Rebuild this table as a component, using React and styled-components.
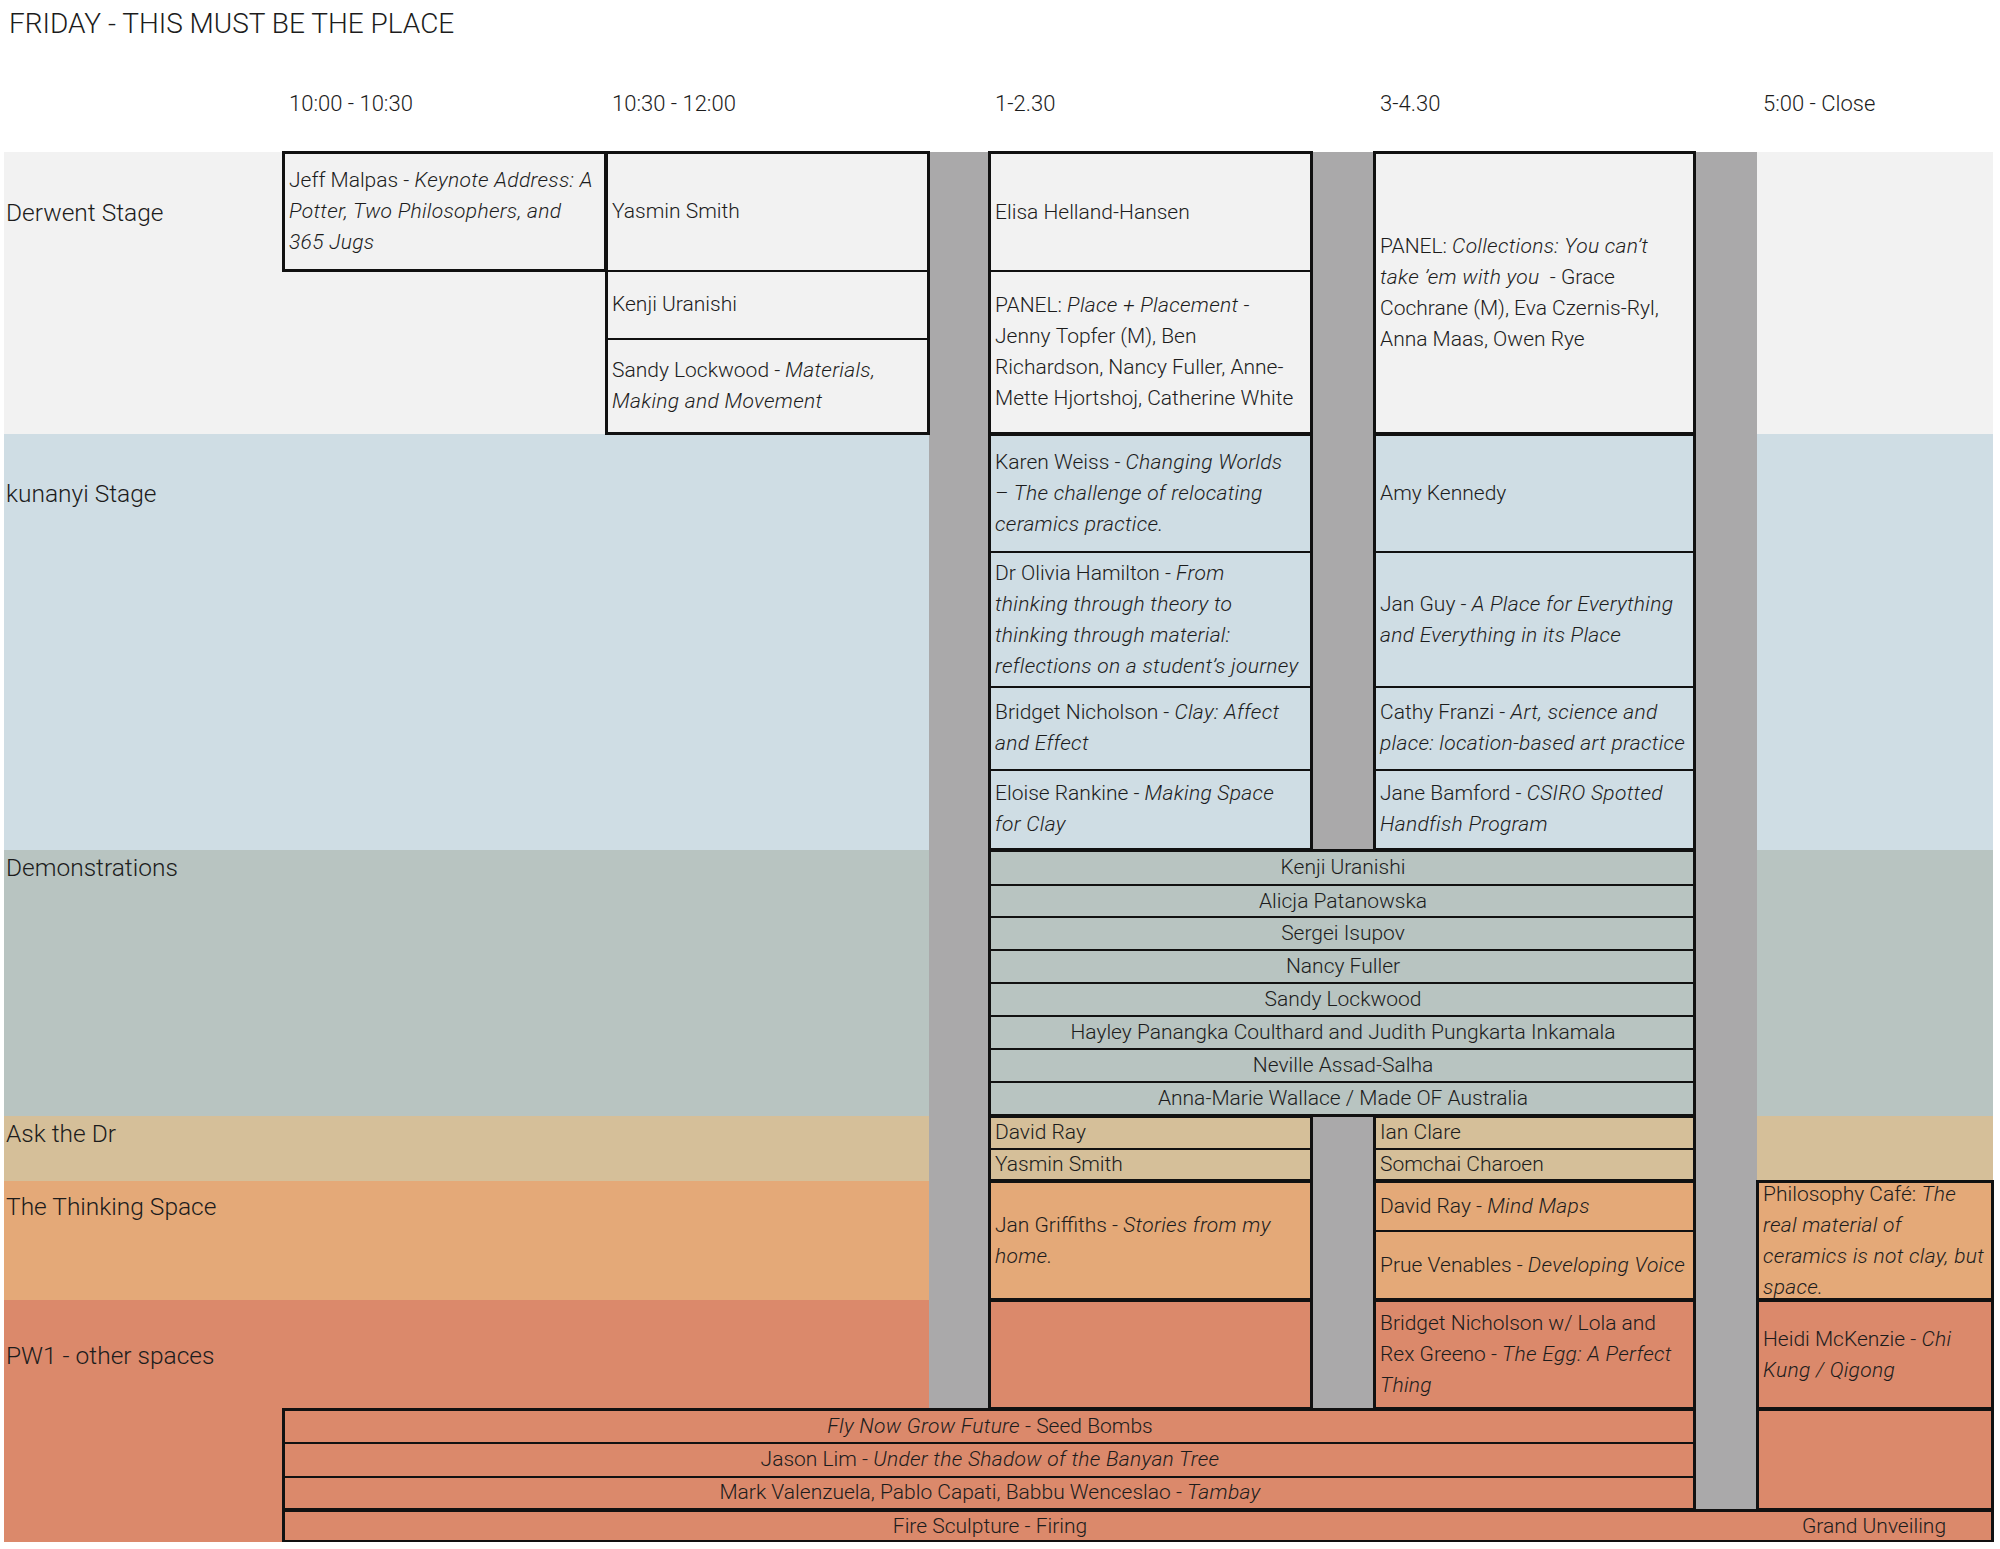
import React from 'react'
import styled, { createGlobalStyle } from 'styled-components'

const COLS = [279, 323, 323, 60, 323, 62, 321, 62, 236]
const ROWS = [119, 68, 95, 118, 136, 83, 79, 34, 33, 33, 33, 33, 34, 33, 33, 33, 32, 50, 69, 109, 34, 34, 33, 32]

const INK = '#1c1c1c'
const NB = '\u00a0'

const GlobalStyle = createGlobalStyle`
    body {
        margin: 0;
        background: #fff;
        font-family: Roboto, "Liberation Sans", sans-serif;
        font-weight: 300;
        color: ${INK};
    }
    em {
        letter-spacing: 0.3px;
    }
`

const Page = styled.div`
    width: 1989px;
    padding-left: 4px;
`

const Title = styled.h1`
    box-sizing: border-box;
    height: 92px;
    margin: 0;
    padding: 10px 0 0 5px;
    font-size: 28px;
    line-height: 28px;
    font-weight: 300;
`

const Schedule = styled.div`
    display: grid;
    grid-template-columns: ${COLS.map(c => c + 'px').join(' ')};
    grid-template-rows: 60px ${ROWS.map(r => r + 'px').join(' ')};
`

// c = column index (0 = stage names), r = row index below the time header
const place = p => `
    grid-column: ${p.$c + 1} / span ${p.$cs || 1};
    grid-row: ${p.$r + 2} / span ${p.$rs || 1};
`

const TimeHead = styled.div`
    grid-row: 1;
    grid-column: ${p => p.$c + 1};
    padding: 1px 0 0 6px;
    font-size: 22px;
    line-height: 22px;
    white-space: nowrap;
`

const Band = styled.div`
    grid-column: 1 / -1;
    grid-row: ${p => p.$r + 2} / span ${p => p.$rs};
    background: ${p => p.$bg};
`

const StageName = styled.div`
    grid-column: 1;
    grid-row: ${p => p.$r + 2};
    align-self: center;
    padding: 2px 0 0 2px;
    font-size: 24.5px;
    line-height: 28px;
    white-space: nowrap;
`

const Break = styled.div`
    ${place}
    background: #aaa9aa;
`

const Block = styled.div`
    ${place}
    display: flex;
    flex-direction: column;
    margin: -1px;
    border: 3px solid #111;
    min-width: 0;
    min-height: 0;
`

const Slot = styled.div`
    flex: ${p => p.$h} 1 0px;
    min-height: 0;
    display: flex;
    align-items: center;
    justify-content: ${p => (p.$center ? 'center' : 'flex-start')};
    text-align: ${p => (p.$center ? 'center' : 'left')};
    padding: 0 2px 0 4px;
    font-size: 21px;
    line-height: 31px;

    & + & {
        border-top: 2px solid #111;
    }
`

const SlotText = styled.div`
    min-width: 0;
`

const Keep = styled.span`
    white-space: nowrap;
`

const FireRow = styled.div`
    flex: 1;
    display: grid;
    grid-template-columns: 1410px 62px 1fr;
    align-items: center;
    font-size: 21px;
    line-height: 26px;
    text-align: center;
`

const FireCell = styled.div`
    grid-column: ${p => p.$col};
    white-space: nowrap;
`

const spanHeight = (r, n) => ROWS.slice(r, r + n).reduce((a, b) => a + b, 0)

const times = [
    { c: 1, label: '10:00 - 10:30' },
    { c: 2, label: '10:30 - 12:00' },
    { c: 4, label: '1-2.30' },
    { c: 6, label: '3-4.30' },
    { c: 8, label: '5:00 - Close' },
]

const stages = [
    { name: 'Derwent Stage', r: 0, rs: 3, bg: '#f2f2f2' },
    { name: 'kunanyi Stage', r: 3, rs: 4, bg: '#cfdde4' },
    { name: 'Demonstrations', r: 7, rs: 8, bg: '#b8c4c1' },
    { name: 'Ask the Dr', r: 15, rs: 2, bg: '#d5bf99' },
    { name: 'The Thinking Space', r: 17, rs: 2, bg: '#e4a978' },
    { name: 'PW1 - other spaces', r: 19, rs: 5, bg: '#db896b' },
]

const breaks = [
    { c: 3, r: 0, rs: 20 },
    { c: 5, r: 0, rs: 7 },
    { c: 5, r: 15, rs: 5 },
    { c: 7, r: 0, rs: 23 },
]

const demos = [
    'Kenji Uranishi',
    'Alicja Patanowska',
    'Sergei Isupov',
    'Nancy Fuller',
    'Sandy Lockwood',
    'Hayley Panangka Coulthard and Judith Pungkarta Inkamala',
    'Neville Assad-Salha',
    'Anna-Marie Wallace / Made OF Australia',
]

// each slot: [rows it covers, content]; NB / Keep hold words together the way the printed sheet wraps them
const blocks = [
    { c: 1, r: 0, slots: [[1, <>Jeff Malpas - <em>Keynote Address: A Potter, Two Philosophers, and 365{NB}Jugs</em></>]] },
    {
        c: 2, r: 0, slots: [
            [1, 'Yasmin Smith'],
            [1, 'Kenji Uranishi'],
            [1, <>Sandy Lockwood - <em>Materials, Making and Movement</em></>],
        ],
    },
    {
        c: 4, r: 0, slots: [
            [1, 'Elisa Helland-Hansen'],
            [2, <>PANEL: <em>Place + Placement</em> - Jenny{NB}Topfer (M), Ben Richardson,{NB}Nancy Fuller, Anne-Mette Hjortshoj, Catherine White</>],
        ],
    },
    {
        c: 6, r: 0, slots: [
            [3, <>PANEL: <em>Collections: You can’t take{NB}’em with you</em> {NB}- Grace Cochrane (M), Eva Czernis-Ryl, Anna Maas, Owen Rye</>],
        ],
    },
    {
        c: 4, r: 3, slots: [
            [1, <>Karen Weiss - <em>Changing Worlds <Keep>– The</Keep> challenge of relocating ceramics practice.</em></>],
            [1, <>Dr Olivia Hamilton - <em>From thinking{NB}through theory to thinking through material: reflections on a student’s journey</em></>],
            [1, <>Bridget Nicholson - <em>Clay: Affect and{NB}Effect</em></>],
            [1, <>Eloise Rankine - <em>Making Space for{NB}Clay</em></>],
        ],
    },
    {
        c: 6, r: 3, slots: [
            [1, 'Amy Kennedy'],
            [1, <>Jan Guy - <em>A Place for Everything and Everything in its Place</em></>],
            [1, <>Cathy Franzi - <em>Art, science and place: location-based art practice</em></>],
            [1, <>Jane Bamford - <em>CSIRO Spotted Handfish Program</em></>],
        ],
    },
    { c: 4, cs: 3, r: 7, center: true, slots: demos.map(d => [1, d]) },
    { c: 4, r: 15, slots: [[1, 'David Ray'], [1, 'Yasmin Smith']] },
    { c: 6, r: 15, slots: [[1, 'Ian Clare'], [1, 'Somchai Charoen']] },
    { c: 4, r: 17, slots: [[2, <>Jan Griffiths - <em>Stories from my home.</em></>]] },
    {
        c: 6, r: 17, slots: [
            [1, <>David Ray - <em>Mind Maps</em></>],
            [1, <>Prue Venables - <em>Developing Voice</em></>],
        ],
    },
    { c: 8, r: 17, slots: [[2, <>Philosophy Café: <em>The real material of ceramics{NB}is not clay, but space.</em></>]] },
    { c: 4, r: 19, slots: [[1, '']] },
    { c: 6, r: 19, slots: [[1, <>Bridget Nicholson w/ Lola and Rex Greeno - <em>The Egg: A Perfect Thing</em></>]] },
    { c: 8, r: 19, slots: [[1, <>Heidi McKenzie - <em>Chi Kung / Qigong</em></>]] },
    {
        c: 1, cs: 6, r: 20, center: true, slots: [
            [1, <><em>Fly Now Grow Future</em> - Seed Bombs</>],
            [1, <>Jason Lim - <em>Under the Shadow of the Banyan Tree</em></>],
            [1, <>Mark Valenzuela, Pablo Capati, Babbu Wenceslao - <em>Tambay</em></>],
        ],
    },
    { c: 8, r: 20, slots: [[3, '']] },
]

const SessionBlock = ({ block }) => {
    let row = block.r
    const rs = block.slots.reduce((a, s) => a + s[0], 0)
    return (
        <Block $c={block.c} $cs={block.cs} $r={block.r} $rs={rs}>
            {block.slots.map(([n, content], i) => {
                const h = spanHeight(row, n)
                row += n
                return (
                    <Slot key={i} $h={h} $center={block.center}>
                        <SlotText>{content}</SlotText>
                    </Slot>
                )
            })}
        </Block>
    )
}

const App = () => (
    <Page>
        <GlobalStyle />
        <Title>FRIDAY - THIS MUST BE THE PLACE</Title>
        <Schedule>
            {times.map(t => (
                <TimeHead key={t.label} $c={t.c}>{t.label}</TimeHead>
            ))}
            {stages.map(s => (
                <Band key={s.name} $r={s.r} $rs={s.rs} $bg={s.bg} />
            ))}
            {breaks.map((b, i) => (
                <Break key={i} $c={b.c} $r={b.r} $rs={b.rs} />
            ))}
            {stages.map(s => (
                <StageName key={s.name} $r={s.r}>{s.name}</StageName>
            ))}
            {blocks.map((b, i) => (
                <SessionBlock key={i} block={b} />
            ))}
            <Block $c={1} $cs={8} $r={23}>
                <FireRow>
                    <FireCell $col={1}>Fire Sculpture - Firing</FireCell>
                    <FireCell $col={3}>Grand Unveiling</FireCell>
                </FireRow>
            </Block>
        </Schedule>
    </Page>
)

export default App
